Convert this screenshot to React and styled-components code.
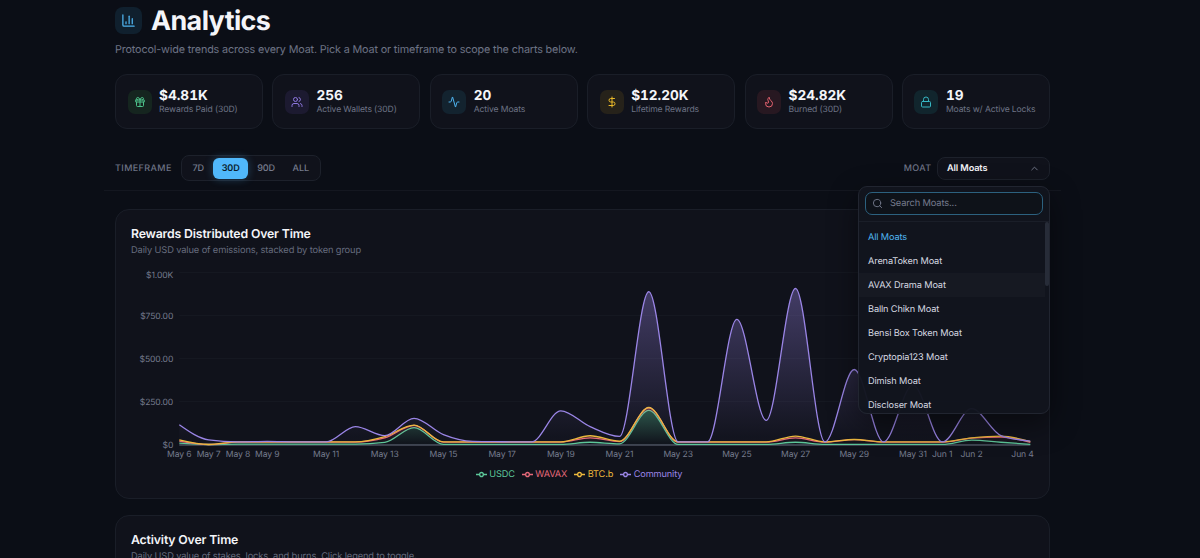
import React, { useState } from 'react';
import styled, { createGlobalStyle, css } from 'styled-components';
import {
    Activity,
    ChartColumn,
    ChevronUp,
    DollarSign,
    Flame,
    Gift,
    Lock,
    Search,
    Users,
} from 'lucide-react';

const GlobalStyle = createGlobalStyle`
    * {
        box-sizing: border-box;
    }

    body {
        margin: 0;
        background-color: #0b0e16;
        color: #f4f5f9;
        font-family: Inter, "Liberation Sans", sans-serif;
        text-rendering: geometricPrecision;
        overflow: hidden;
    }

    h1, h2, p, ul {
        margin: 0;
        padding: 0;
        font-weight: 400;
    }

    button, input {
        font-family: inherit;
        text-rendering: inherit;
    }
`;

const Page = styled.main`
    width: 935px;
    height: 558px;
    margin-left: 115px;
    padding-top: 7px;
`;

const TitleRow = styled.header`
    display: flex;
    align-items: center;
    gap: 9px;
    height: 27px;
`;

const TitleIcon = styled.div`
    display: flex;
    align-items: center;
    justify-content: center;
    width: 27px;
    height: 27px;
    border-radius: 8px;
    background-color: #10202e;
    color: #4fb4f0;
`;

const Title = styled.h1`
    padding-top: 2px;
    font-size: 26.9px;
    font-weight: 700;
    line-height: 27px;
    letter-spacing: -0.6px;
`;

const Lead = styled.p`
    margin-top: 9px;
    font-size: 10.8px;
    line-height: 14px;
    letter-spacing: -0.014em;
    color: #6d7385;
`;

const Stats = styled.section`
    display: grid;
    grid-template-columns: repeat(6, 1fr);
    gap: 9.3px;
    margin-top: 17px;
`;

const StatCard = styled.div`
    display: flex;
    align-items: center;
    gap: 7.5px;
    height: 55px;
    padding-left: 11.5px;
    border: 1px solid #1a1e28;
    border-radius: 12px;
    background-color: #10121b;
`;

const StatIcon = styled.div`
    display: flex;
    align-items: center;
    justify-content: center;
    flex: none;
    width: 24px;
    height: 24px;
    border-radius: 7px;
    color: ${props => props.$color};
    background-color: ${props => props.$background};
`;

const StatText = styled.div`
    padding-top: 3px;
`;

const StatValue = styled.div`
    font-size: 13.6px;
    font-weight: 700;
    line-height: 15px;
    font-variant-numeric: tabular-nums;
`;

const StatLabel = styled.div`
    font-size: 8.6px;
    line-height: 13px;
    letter-spacing: -0.014em;
    color: #6d7385;
    white-space: nowrap;
`;

const Filters = styled.section`
    display: flex;
    align-items: center;
    justify-content: space-between;
    height: 43.5px;
    margin: 18px -11px 0;
    padding: 0 11px;
    border-bottom: 1px solid #141720;
`;

const FilterGroup = styled.div`
    position: relative;
    display: flex;
    align-items: center;
    gap: ${props => props.$gap};
`;

const FilterLabel = styled.span`
    padding-top: 1px;
    font-size: 9px;
    font-weight: 500;
    letter-spacing: 0.4px;
    color: #6d7385;
`;

const Segments = styled.div`
    display: flex;
    align-items: center;
    height: 26px;
    padding: 0 2px;
    border: 1px solid #1d212b;
    border-radius: 8px;
    background-color: #10121b;
`;

const Segment = styled.button`
    height: 21px;
    padding: 1px 8.8px 0;
    border: 0;
    border-radius: 6px;
    background: none;
    font-size: 9.1px;
    font-weight: 500;
    letter-spacing: -0.014em;
    color: #757b8d;

    ${props => props.$active && css`
        background-color: #50b8fb;
        color: #0b1e2e;
        font-weight: 600;
        box-shadow: 0 0 8px rgba(80, 184, 251, 0.3);
    `}
`;

const SelectButton = styled.button`
    display: flex;
    align-items: center;
    justify-content: space-between;
    width: 113px;
    height: 23px;
    padding: 1px 9px 0;
    border: 1px solid #1d212b;
    border-radius: 8px;
    background-color: #10121b;
    color: #f4f5f9;
    font-size: 9.2px;
    font-weight: 600;
    letter-spacing: -0.014em;

    svg {
        color: #757b8d;
    }
`;

const Menu = styled.div`
    position: absolute;
    z-index: 2;
    top: 29px;
    right: 0;
    width: 192px;
    height: 228px;
    border: 1px solid #212530;
    border-radius: 9px;
    background-color: rgba(18, 21, 30, 0.97);
    box-shadow: 0 10px 30px rgba(0, 0, 0, 0.45);
    overflow: hidden;
`;

const SearchArea = styled.div`
    height: 35px;
    padding: 5px 6px 0;
    border-bottom: 1px solid #1a1e28;
`;

const SearchBox = styled.label`
    display: flex;
    align-items: center;
    gap: 7px;
    height: 23px;
    padding-left: 6px;
    border: 1px solid #2c617f;
    border-radius: 7px;
    background-color: #0e1219;
    color: #757b8d;
`;

const SearchInput = styled.input`
    width: 130px;
    padding: 1px 0 0;
    border: 0;
    outline: 0;
    background: none;
    color: #f4f5f9;
    font-size: 9.3px;
    letter-spacing: -0.014em;

    &::placeholder {
        color: #757b8d;
        opacity: 1;
    }
`;

const OptionArea = styled.div`
    display: flex;
    height: 193px;
`;

const OptionList = styled.ul`
    flex: 1;
    padding-top: 3px;
    list-style: none;
`;

const Option = styled.li`
    height: 24px;
    padding-left: 9px;
    font-size: 9.2px;
    line-height: 26px;
    letter-spacing: -0.014em;
    color: ${props => (props.$selected ? '#4fb4f0' : '#d5d8e0')};
    background-color: ${props => (props.$hovered ? '#161922' : 'transparent')};
`;

const ScrollThumb = styled.div`
    width: 4px;
    height: 64px;
    border-radius: 2px;
    background-color: #272c38;
`;

const Panel = styled.section`
    height: ${props => props.$height};
    margin-top: ${props => props.$top};
    padding: 16px 15px 0;
    border: 1px solid #1a1e28;
    border-radius: 14px;
    background-color: #10121b;
`;

const PanelTitle = styled.h2`
    font-size: 12.3px;
    font-weight: 600;
    line-height: 15px;
    letter-spacing: -0.014em;
`;

const PanelText = styled.p`
    margin-top: 3px;
    font-size: 9.3px;
    line-height: 13px;
    letter-spacing: -0.014em;
    color: #666c7e;
`;

const Chart = styled.svg`
    display: block;
    margin: 8px 0 0 -1px;
`;

const AxisText = styled.text`
    font-size: 8.6px;
    letter-spacing: -0.014em;
    fill: #757b8d;
`;

const Legend = styled.div`
    display: flex;
    justify-content: center;
    gap: 7px;
    margin: 1px 0 0 -7px;
`;

const LegendItem = styled.span`
    display: flex;
    align-items: center;
    gap: 2.5px;
    font-size: 9.2px;
    line-height: 13px;
    letter-spacing: -0.014em;
    color: ${props => props.$color};
`;

const stats = [
    { Icon: Gift, value: '$4.81K', label: 'Rewards Paid (30D)', color: '#4cc38a', background: '#15251f' },
    { Icon: Users, value: '256', label: 'Active Wallets (30D)', color: '#8f78e0', background: '#1c1a30' },
    { Icon: Activity, value: '20', label: 'Active Moats', color: '#4fb4f0', background: '#13232f' },
    { Icon: DollarSign, value: '$12.20K', label: 'Lifetime Rewards', color: '#eab929', background: '#26221a' },
    { Icon: Flame, value: '$24.82K', label: 'Burned (30D)', color: '#e5626f', background: '#271821' },
    { Icon: Lock, value: '19', label: 'Moats w/ Active Locks', color: '#36b7c4', background: '#11252d' },
];

const moats = [
    'All Moats',
    'ArenaToken Moat',
    'AVAX Drama Moat',
    'Balln Chikn Moat',
    'Bensi Box Token Moat',
    'Cryptopia123 Moat',
    'Dimish Moat',
    'Discloser Moat',
];

// running totals, one value per day, May 6 to Jun 4
const series = [
    {
        name: 'USDC',
        color: '#5cc79a',
        values: [8, 0, 2, 2, 2, 2, 2, 12, 98, 1, 1, 1, 1, 1, 13, 4, 198, 1, 1, 1, 1, 13, 1, 1, 1, 1, 1, 25, 13, 1],
    },
    {
        name: 'WAVAX',
        color: '#e5697a',
        values: [20, 0, 14, 14, 14, 14, 14, 38, 111, 14, 14, 14, 14, 14, 39, 17, 213, 14, 14, 14, 14, 38, 14, 28, 14, 14, 14, 37, 43, 13],
    },
    {
        name: 'BTC.b',
        color: '#edb93c',
        values: [27, 0, 15, 15, 15, 15, 15, 46, 113, 15, 15, 15, 15, 15, 51, 19, 215, 15, 15, 15, 15, 49, 15, 29, 15, 15, 15, 39, 49, 16],
    },
    {
        name: 'Community',
        color: '#9a85e6',
        values: [115, 27, 15, 18, 15, 15, 104, 52, 152, 57, 18, 16, 15, 196, 104, 47, 888, 15, 15, 728, 140, 907, 15, 436, 15, 345, 15, 208, 52, 20],
    },
];

const days = [
    [0, 'May 6'], [1, 'May 7'], [2, 'May 8'], [3, 'May 9'], [5, 'May 11'], [7, 'May 13'],
    [9, 'May 15'], [11, 'May 17'], [13, 'May 19'], [15, 'May 21'], [17, 'May 23'], [19, 'May 25'],
    [21, 'May 27'], [23, 'May 29'], [25, 'May 31'], [26, 'Jun 1'], [27, 'Jun 2'],
];

const amounts = [[0, '$0'], [250, '$250.00'], [500, '$500.00'], [750, '$750.00'], [1000, '$1.00K']];

const LEFT = 49.3;
const RIGHT = 900.3;
const BASE = 179.5;
const STEP = (RIGHT - LEFT) / 29;

const toX = day => LEFT + day * STEP;
const toY = value => BASE - value * 0.172;

// monotone cubic through all the points, drawn from start in steps of dx
const curve = (values, start, dx) => {
    const ys = values.map(toY);
    const last = ys.length - 1;
    const slopes = ys.slice(1).map((y, i) => y - ys[i]);
    const tangents = ys.map((y, i) => {
        if (i === 0 || i === last) {
            return 0;
        }
        const a = slopes[i - 1];
        const b = slopes[i];
        return (Math.sign(a) + Math.sign(b)) * Math.min(Math.abs(a), Math.abs(b), Math.abs(a + b) / 4);
    });
    tangents[0] = (3 * slopes[0] - tangents[1]) / 2;
    tangents[last] = (3 * slopes[last - 1] - tangents[last - 1]) / 2;

    return ys.slice(1).reduce((path, y, i) => {
        const x0 = start + i * dx;
        const x1 = x0 + dx;
        return `${path}C${x0 + dx / 3},${ys[i] + tangents[i] / 3},${x1 - dx / 3},${y - tangents[i + 1] / 3},${x1},${y}`;
    }, `${start},${ys[0]}`);
};

const linePath = values => `M${curve(values, LEFT, STEP)}`;

const areaPath = (values, below) => (
    `${linePath(values)}L${below ? curve([...below].reverse(), RIGHT, -STEP) : `${RIGHT},${BASE}L${LEFT},${BASE}`}Z`
);

const RewardsChart = () => (
    <Chart width="904" height="202" viewBox="0 0 904 202">
        <defs>
            {series.map(({ name, color }) => (
                <linearGradient key={name} id={`fill-${name}`} x1="0" y1="0" x2="0" y2="1">
                    <stop offset="5%" stopColor={color} stopOpacity="0.35" />
                    <stop offset="95%" stopColor={color} stopOpacity="0.02" />
                </linearGradient>
            ))}
        </defs>
        {amounts.map(([value, label]) => (
            <g key={label}>
                <line x1={LEFT} x2={RIGHT} y1={toY(value)} y2={toY(value)} stroke="#171a23" strokeWidth="0.8" />
                <AxisText x="43.2" y={toY(value) + (value === 1000 ? 5 : 3)} textAnchor="end">{label}</AxisText>
            </g>
        ))}
        <line x1={LEFT} x2={RIGHT} y1={BASE + 0.5} y2={BASE + 0.5} stroke="#666c7e" strokeWidth="1" />
        {series.map(({ name, color, values }, i) => (
            <g key={name}>
                <path d={areaPath(values, i > 0 && series[i - 1].values)} fill={`url(#fill-${name})`} />
                <path d={linePath(values)} fill="none" stroke={color} strokeWidth="1.3" />
            </g>
        ))}
        {days.map(([day, label]) => (
            <AxisText key={label} x={toX(day)} y={BASE + 12} textAnchor="middle">{label}</AxisText>
        ))}
        <AxisText x="903.8" y={BASE + 12} textAnchor="end">Jun 4</AxisText>
    </Chart>
);

const App = () => {
    const [timeframe, setTimeframe] = useState('30D');

    return (
        <Page>
            <GlobalStyle />
            <TitleRow>
                <TitleIcon><ChartColumn size={15} /></TitleIcon>
                <Title>Analytics</Title>
            </TitleRow>
            <Lead>Protocol-wide trends across every Moat. Pick a Moat or timeframe to scope the charts below.</Lead>

            <Stats>
                {stats.map(({ Icon, value, label, color, background }) => (
                    <StatCard key={label}>
                        <StatIcon $color={color} $background={background}>
                            <Icon size={12} />
                        </StatIcon>
                        <StatText>
                            <StatValue>{value}</StatValue>
                            <StatLabel>{label}</StatLabel>
                        </StatText>
                    </StatCard>
                ))}
            </Stats>

            <Filters>
                <FilterGroup $gap="9px">
                    <FilterLabel>TIMEFRAME</FilterLabel>
                    <Segments>
                        {['7D', '30D', '90D', 'ALL'].map(name => (
                            <Segment key={name} $active={name === timeframe} onClick={() => setTimeframe(name)}>
                                {name}
                            </Segment>
                        ))}
                    </Segments>
                </FilterGroup>
                <FilterGroup $gap="5.5px">
                    <FilterLabel>MOAT</FilterLabel>
                    <SelectButton>
                        All Moats
                        <ChevronUp size={11} />
                    </SelectButton>
                    <Menu>
                        <SearchArea>
                            <SearchBox>
                                <Search size={11} />
                                <SearchInput placeholder="Search Moats..." />
                            </SearchBox>
                        </SearchArea>
                        <OptionArea>
                            <OptionList>
                                {moats.map((name, i) => (
                                    <Option key={name} $selected={i === 0} $hovered={i === 2}>{name}</Option>
                                ))}
                            </OptionList>
                            <ScrollThumb />
                        </OptionArea>
                    </Menu>
                </FilterGroup>
            </Filters>

            <Panel $top="18.5px" $height="290px">
                <PanelTitle>Rewards Distributed Over Time</PanelTitle>
                <PanelText>Daily USD value of emissions, stacked by token group</PanelText>
                <RewardsChart />
                <Legend>
                    {series.map(({ name, color }) => (
                        <LegendItem key={name} $color={color}>
                            <svg width="11" height="11" viewBox="0 0 32 32" fill="none" stroke={color} strokeWidth="4">
                                <path d="M0 16h10.7a5.33 5.33 0 1 1 10.6 0H32M21.3 16a5.33 5.33 0 1 1-10.6 0" />
                            </svg>
                            {name}
                        </LegendItem>
                    ))}
                </Legend>
            </Panel>

            <Panel $top="16px" $height="290px">
                <PanelTitle>Activity Over Time</PanelTitle>
                <PanelText>Daily USD value of stakes, locks, and burns. Click legend to toggle.</PanelText>
            </Panel>
        </Page>
    );
};

export default App;
